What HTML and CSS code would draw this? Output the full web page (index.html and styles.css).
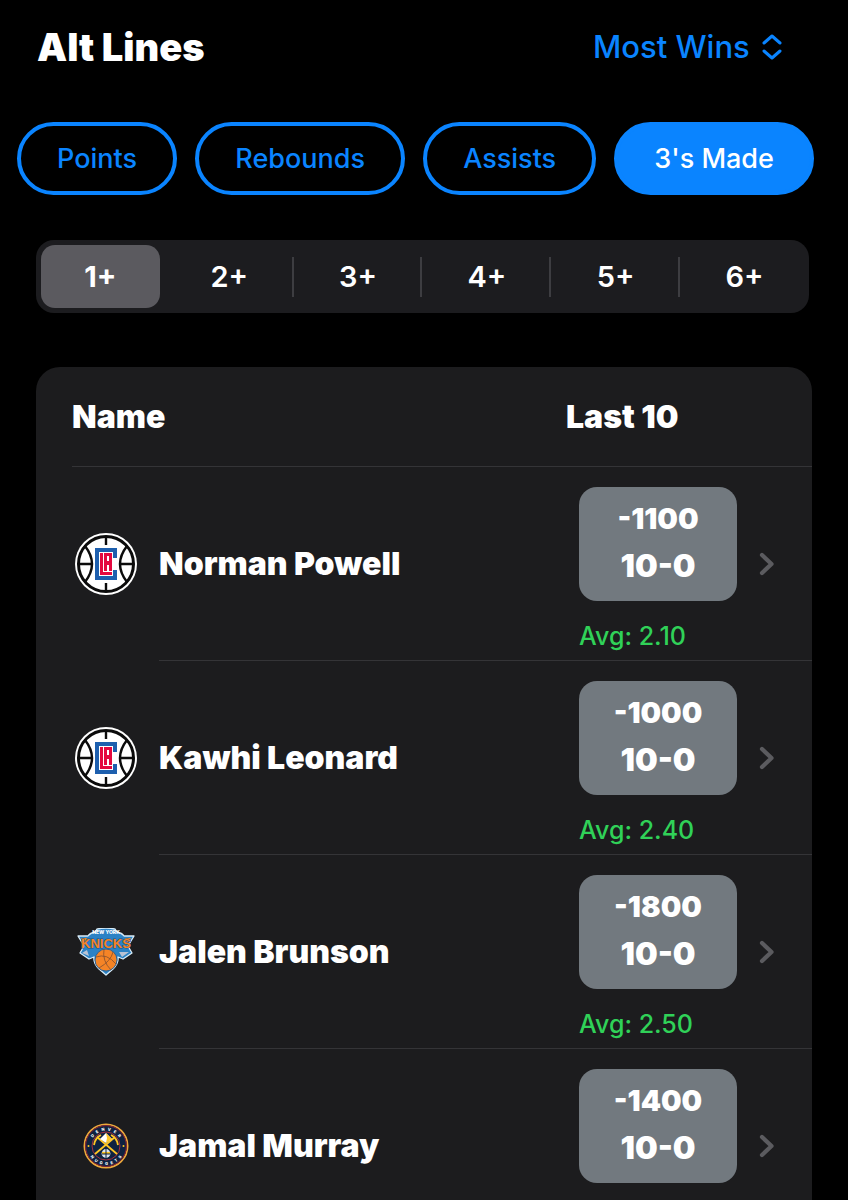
FILE: index.html
```
<!DOCTYPE html>
<html lang="en">
<head>
    <meta charset="utf-8">
    <title>Alt Lines</title>
    <meta name="viewport" content="width=device-width, initial-scale=1"/>
    <link rel="stylesheet" href="styles.css">
</head>
<body>

<!-- shared icons -->
<svg class="sprite" aria-hidden="true">
    <symbol id="chevron" viewBox="0 0 16 24">
        <path d="M3 3 L12.5 12 L3 21" fill="none" stroke="#5b5b5f" stroke-width="4.2" stroke-linecap="round" stroke-linejoin="round"/>
    </symbol>

    <symbol id="clippers" viewBox="0 0 62 62">
        <circle cx="31" cy="31" r="31" fill="#fff"/>
        <circle cx="31" cy="31" r="27.5" fill="none" stroke="#0b0b0b" stroke-width="3"/>
        <path d="M10 13 Q24 31 10 49 M52 13 Q38 31 52 49 M4 31 H17 M45 31 H58 M31 4 V12 M31 50 V58" fill="none" stroke="#0b0b0b" stroke-width="2.4"/>
        <rect x="20" y="15" width="4" height="32" fill="#1d5fae"/>
        <rect x="20" y="15" width="22" height="4" fill="#1d5fae"/>
        <rect x="20" y="43" width="22" height="4" fill="#1d5fae"/>
        <rect x="38" y="15" width="4" height="10" fill="#1d5fae"/>
        <rect x="38" y="37" width="4" height="10" fill="#1d5fae"/>
        <rect x="25" y="20" width="3" height="22" fill="#e4093f"/>
        <rect x="25" y="39" width="12" height="3" fill="#e4093f"/>
        <rect x="29" y="20" width="8" height="3" fill="#e4093f"/>
        <rect x="29" y="20" width="3" height="18" fill="#e4093f"/>
        <rect x="34" y="20" width="3" height="18" fill="#e4093f"/>
        <rect x="29" y="28" width="8" height="4" fill="#e4093f"/>
    </symbol>

    <symbol id="knicks" viewBox="0 0 58 48">
        <path d="M1 8 H11 Q13 5 18 4 L20 1 Q29 -1 38 1 L40 4 Q45 5 47 8 H57 L51 18 L55 25 L46 31 L41 29 Q42 35 36 41 L29 47 L22 41 Q16 35 17 29 L12 31 L3 25 L7 18 Z" fill="#2b82c5" stroke="#d9ecf8" stroke-width="1.3" stroke-linejoin="round"/>
        <path d="M4 10 H10 L7 15 Z M54 10 H48 L51 15 Z" fill="#f58426"/>
        <path d="M5 25 L10 22 L12 28 Z M42 24 L52 24 L45 29 Z" fill="#b9c3d4"/>
        <text x="29" y="6" text-anchor="middle" class="knicks-city">NEW YORK</text>
        <text x="29" y="20" text-anchor="middle" class="knicks-name">KNICKS</text>
        <circle cx="29" cy="32" r="11" fill="#f58426" stroke="#2b6295" stroke-width="1"/>
        <path d="M19 29 Q30 25 39 36 M27 21 Q25 33 34 42 M36 24 Q34 33 22 40" fill="none" stroke="#8f552f" stroke-width="0.9"/>
    </symbol>

    <symbol id="nuggets" viewBox="0 0 46 46">
        <circle cx="23" cy="23" r="21.7" fill="#0e2240" stroke="#eda93b" stroke-width="1.6"/>
        <circle cx="23" cy="23" r="20.4" fill="none" stroke="#8b2131" stroke-width="1"/>
        <circle cx="23" cy="23" r="14" fill="#0e2240" stroke="#a2313f" stroke-width="1"/>
        <path id="arc-top" d="M7.5 23 A15.5 15.5 0 0 1 38.5 23" fill="none"/>
        <path id="arc-bottom" d="M4 23 A19 19 0 0 0 42 23" fill="none"/>
        <text class="nuggets-text"><textPath href="#arc-top" startOffset="50%" text-anchor="middle">D &#8194;E &#8194;N &#8194;V &#8194;E &#8194;R</textPath></text>
        <text class="nuggets-text"><textPath href="#arc-bottom" startOffset="50%" text-anchor="middle">N &#8194;U &#8194;G &#8194;G &#8194;E &#8194;T &#8194;S</textPath></text>
        <circle cx="5.5" cy="23" r="1" fill="#fec524"/>
        <circle cx="40.5" cy="23" r="1" fill="#fec524"/>
        <path d="M14 14 L34 31 M32 14 L12 31" stroke="#fec524" stroke-width="1.8"/>
        <path d="M11 22 Q12 15 18 12 M35 22 Q34 15 28 12" fill="none" stroke="#fec524" stroke-width="1.8"/>
        <path d="M17 16 L23 10 L29 16 L23 20 Z" fill="#fff"/>
        <path d="M23 10 L29 16 L23 20 L24 15 Z" fill="#fec524"/>
        <circle cx="23" cy="30.5" r="4.4" fill="#dce5ef"/>
        <path d="M19 29 H27 V31 H19 Z" fill="#fec524"/>
        <path d="M19 31 H27 M23 26 V35" stroke="#0e2240" stroke-width="1"/>
    </symbol>
</svg>

<header class="top-bar">
    <h1 class="title">Alt Lines</h1>
    <label class="sort">
        <select class="sort-select" aria-label="Sort by">
            <option>Most Wins</option>
        </select>
        <svg class="sort-icon" viewBox="0 0 20 26" aria-hidden="true">
            <path d="M2 9 L10 2 L18 9 M2 17 L10 24 L18 17"/>
        </svg>
    </label>
</header>

<nav class="stats">
    <button type="button" class="stat">Points</button>
    <button type="button" class="stat">Rebounds</button>
    <button type="button" class="stat">Assists</button>
    <button type="button" class="stat active">3's Made</button>
</nav>

<div class="segments" role="radiogroup" aria-label="Line">
    <label class="segment"><input type="radio" name="line" checked><span>1+</span></label>
    <label class="segment"><input type="radio" name="line"><span>2+</span></label>
    <label class="segment"><input type="radio" name="line"><span>3+</span></label>
    <label class="segment"><input type="radio" name="line"><span>4+</span></label>
    <label class="segment"><input type="radio" name="line"><span>5+</span></label>
    <label class="segment"><input type="radio" name="line"><span>6+</span></label>
</div>

<main class="card">
    <table class="players">
        <thead>
        <tr>
            <th colspan="2">Name</th>
            <th colspan="2">Last 10</th>
        </tr>
        </thead>
        <tbody>
        <tr>
            <td class="team"><svg class="logo"><use href="#clippers"/></svg></td>
            <td class="name">Norman Powell</td>
            <td class="record">
                <div class="odds"><span class="price">-1100</span><span class="wins">10-0</span></div>
                <div class="avg">Avg: 2.10</div>
            </td>
            <td class="more"><svg class="chevron"><use href="#chevron"/></svg></td>
        </tr>
        <tr>
            <td class="team"><svg class="logo"><use href="#clippers"/></svg></td>
            <td class="name">Kawhi Leonard</td>
            <td class="record">
                <div class="odds"><span class="price">-1000</span><span class="wins">10-0</span></div>
                <div class="avg">Avg: 2.40</div>
            </td>
            <td class="more"><svg class="chevron"><use href="#chevron"/></svg></td>
        </tr>
        <tr>
            <td class="team"><svg class="logo logo-knicks"><use href="#knicks"/></svg></td>
            <td class="name">Jalen Brunson</td>
            <td class="record">
                <div class="odds"><span class="price">-1800</span><span class="wins">10-0</span></div>
                <div class="avg">Avg: 2.50</div>
            </td>
            <td class="more"><svg class="chevron"><use href="#chevron"/></svg></td>
        </tr>
        <tr>
            <td class="team"><svg class="logo logo-nuggets"><use href="#nuggets"/></svg></td>
            <td class="name">Jamal Murray</td>
            <td class="record">
                <div class="odds"><span class="price">-1400</span><span class="wins">10-0</span></div>
            </td>
            <td class="more"><svg class="chevron"><use href="#chevron"/></svg></td>
        </tr>
        </tbody>
    </table>
</main>

</body>
</html>
```

FILE: styles.css
```
* {
    box-sizing: border-box;
}

body {
    margin: 0;
    height: 100vh;
    overflow: hidden;
    background: #000;
    color: #fff;
    font-family: Inter, "Liberation Sans", sans-serif;
}

.sprite {
    display: none;
}

/* top bar */
.top-bar {
    display: flex;
    align-items: center;
    justify-content: space-between;
    padding: 23px 66px 0 37px;
}

.title {
    margin: 0;
    font-size: 38px;
    line-height: 48px;
    font-weight: 900;
}

.sort {
    display: flex;
    align-items: center;
    gap: 12px;
}

.sort-select {
    appearance: none;
    border: none;
    padding: 0;
    background: none;
    color: #0a84ff;
    font-family: inherit;
    font-size: 31px;
    line-height: 40px;
    font-weight: 500;
}

.sort-icon {
    width: 20px;
    height: 26px;
    fill: none;
    stroke: #0a84ff;
    stroke-width: 3;
    stroke-linecap: round;
    stroke-linejoin: round;
}

/* stat pills */
.stats {
    display: flex;
    gap: 18px;
    padding: 51px 34px 0 17px;
}

.stat {
    flex: 1 1 auto;
    height: 73px;
    padding: 0 32px;
    border: 4px solid #0a84ff;
    border-radius: 37px;
    background: none;
    color: #0a84ff;
    font-family: inherit;
    font-size: 27px;
    font-weight: 500;
    white-space: nowrap;
}

.stat.active {
    background: #0a84ff;
    color: #fff;
}

/* segmented control */
.segments {
    display: flex;
    height: 73px;
    margin: 45px 39px 0 36px;
    padding: 5px 0;
    border-radius: 18px;
    background: #1c1c1f;
}

.segment {
    flex: 1;
    display: flex;
    align-items: center;
    padding: 0 5px;
    font-size: 29px;
    font-weight: 600;
    background: linear-gradient(#3d3d41, #3d3d41) right center / 2px 40px no-repeat;
}

.segment:first-child,
.segment:last-child {
    background: none;
}

.segment input {
    appearance: none;
    width: 0;
    height: 0;
    margin: 0;
}

.segment span {
    flex: 1;
    line-height: 63px;
    border-radius: 14px;
    text-align: center;
}

.segment input:checked + span {
    background: #5b5a5f;
    font-weight: 700;
}

/* players */
.card {
    margin: 54px 36px 0;
    padding-left: 36px;
    border-radius: 24px 24px 0 0;
    background: #1c1c1e;
}

.players {
    width: 100%;
    border-spacing: 0;
    table-layout: auto;
}

.players th {
    height: 100px;
    padding: 0;
    border-bottom: 1px solid #343437;
    text-align: left;
    font-size: 32px;
    font-weight: 900;
}

.players td {
    height: 194px;
    padding: 0;
    border-bottom: 1px solid #343437;
}

.players .team {
    width: 87px;
    padding-right: 20px;
    border-bottom: none;
    text-align: center;
}

.logo {
    display: block;
    width: 62px;
    height: 62px;
    margin: 0 auto;
}

.logo-knicks {
    width: 58px;
    height: 48px;
}

.logo-nuggets {
    width: 46px;
    height: 46px;
}

.knicks-city {
    font-size: 5px;
    font-weight: 800;
    fill: #fff;
}

.knicks-name {
    font-family: "Liberation Sans", sans-serif;
    font-size: 13px;
    font-weight: 700;
    fill: #f58426;
    stroke: #21527f;
    stroke-width: 1px;
    paint-order: stroke;
}

.nuggets-text {
    font-size: 4px;
    font-weight: 800;
    fill: #fff;
}

.name {
    font-size: 32px;
    font-weight: 900;
}

.players .record {
    width: 193px;
    padding: 20px 0 0 13px;
    vertical-align: top;
}

.odds {
    display: flex;
    flex-direction: column;
    width: 158px;
    height: 114px;
    padding-top: 10px;
    border-radius: 18px;
    background: #72797f;
    text-align: center;
    font-weight: 900;
}

.price {
    font-size: 29px;
    line-height: 44px;
}

.wins {
    font-size: 32px;
    line-height: 50px;
}

.avg {
    margin-top: 19px;
    color: #30d158;
    font-size: 25px;
    line-height: 32px;
    font-weight: 500;
}

.players .more {
    width: 53px;
}

.chevron {
    display: block;
    width: 16px;
    height: 24px;
}
```
